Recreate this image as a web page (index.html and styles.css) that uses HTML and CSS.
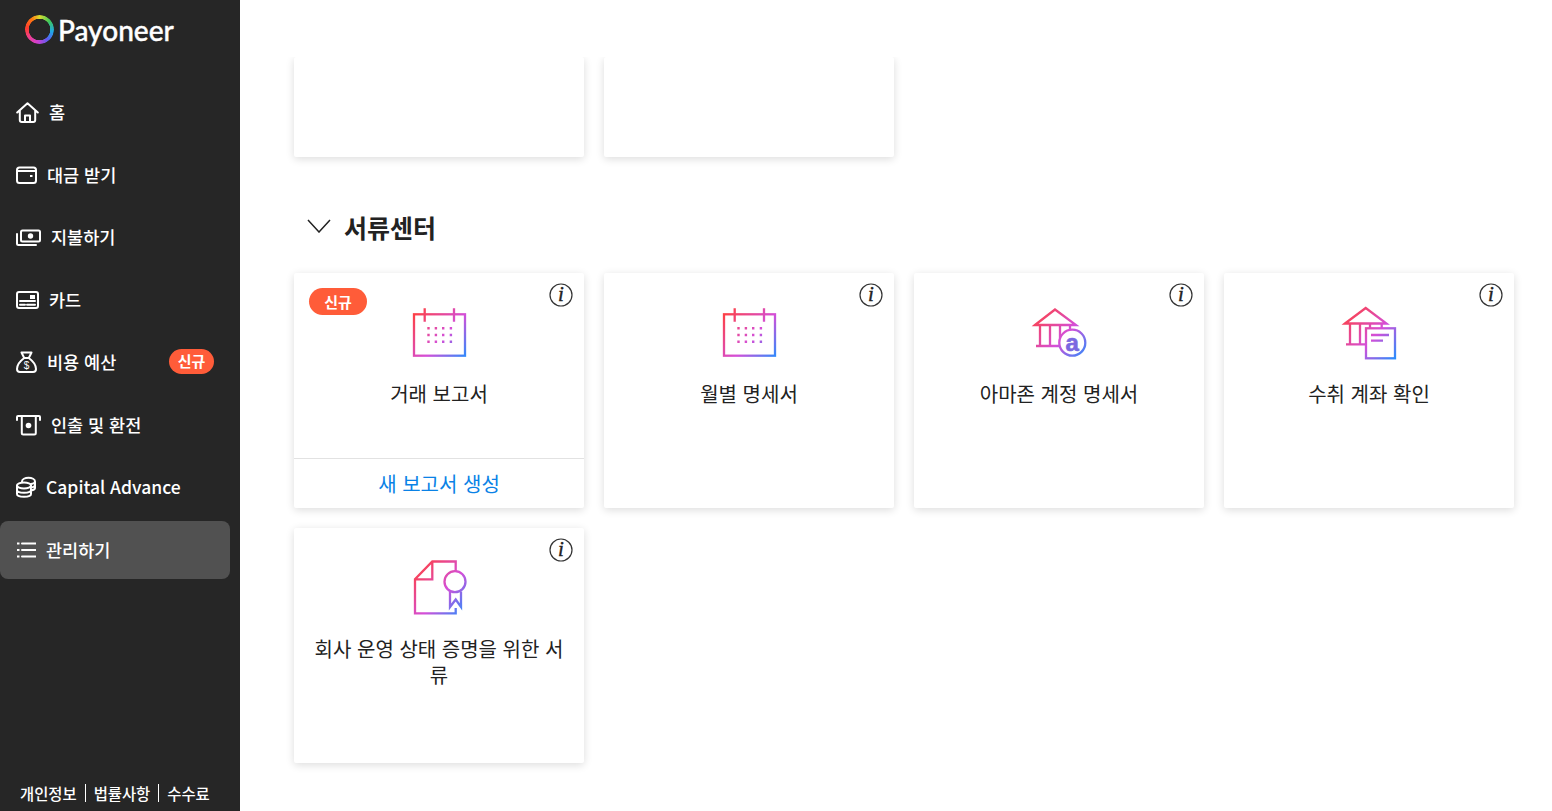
FILE: index.html
```html
<!DOCTYPE html>
<html lang="ko">
<head>
  <title>Payoneer</title>
  <meta charset="UTF-8"/>
  <link rel="stylesheet" href="styles.css">
</head>
<body>

  <svg class="svg-defs" width="0" height="0">
    <defs>
      <linearGradient id="grad" gradientUnits="userSpaceOnUse" x1="6" y1="6" x2="58" y2="54">
        <stop offset="0" stop-color="#ff4040"/>
        <stop offset="0.55" stop-color="#d44fd8"/>
        <stop offset="1" stop-color="#2090ff"/>
      </linearGradient>
    </defs>
  </svg>

  <aside class="sidebar">
    <div class="logo">
      <span class="logo-ring"></span>
      <span class="logo-text">Payoneer</span>
    </div>

    <nav class="nav">
      <a class="nav-item">
        <svg class="nav-icon" width="23" height="24" viewBox="0 0 23 24">
          <path d="M1.200 12.500 11.500 3.200l10.300 9.300M3.800 10.500V20a2 2 0 0 0 2 2h11.400a2 2 0 0 0 2-2v-9.500M9 22v-6.500h5V22"/>
        </svg>
        <span>홈</span>
      </a>
      <a class="nav-item">
        <svg class="nav-icon" width="21" height="24" viewBox="0 0 21 24">
          <rect x="1" y="4.500" width="19" height="15.500" rx="2.500"/>
          <path d="M1 8h18"/>
          <rect class="solid" x="14" y="12" width="2.500" height="2"/>
        </svg>
        <span>대금 받기</span>
      </a>
      <a class="nav-item">
        <svg class="nav-icon" width="25" height="24" viewBox="0 0 25 24">
          <rect x="5" y="5.500" width="19" height="11" rx="1.500"/>
          <circle class="solid" cx="14.500" cy="11" r="2.700"/>
          <path d="M1 9v9.500a1.500 1.500 0 0 0 1.500 1.500H20"/>
        </svg>
        <span>지불하기</span>
      </a>
      <a class="nav-item">
        <svg class="nav-icon" width="23" height="24" viewBox="0 0 23 24">
          <rect x="1" y="4" width="21" height="16" rx="2"/>
          <rect class="solid" x="14" y="7" width="5" height="4"/>
          <path d="M4 13h15M4 16.800h5M11 16.800h8"/>
        </svg>
        <span>카드</span>
      </a>
      <a class="nav-item">
        <svg class="nav-icon" width="21" height="24" viewBox="0 0 21 24">
          <path d="M5.500 2.500h10l-2.700 5.500H8.200zM8.200 8C3.500 11.500 1 15.500 1 19a3 3 0 0 0 3 3h13a3 3 0 0 0 3-3c0-3.500-2.500-7.500-7.200-11"/>
          <text class="bag-dollar" x="10.500" y="19">$</text>
        </svg>
        <span>비용 예산</span>
        <span class="nav-badge">신규</span>
      </a>
      <a class="nav-item">
        <svg class="nav-icon" width="25" height="24" viewBox="0 0 25 24">
          <path d="M1 7V4a1 1 0 0 1 1-1h21a1 1 0 0 1 1 1v3M5.800 3v17a1.500 1.500 0 0 0 1.500 1.500h11a1.500 1.500 0 0 0 1.500-1.500V3"/>
          <circle class="solid" cx="12.500" cy="12.500" r="2.800"/>
        </svg>
        <span>인출 및 환전</span>
      </a>
      <a class="nav-item">
        <svg class="nav-icon" width="20" height="24" viewBox="0 0 20 24">
          <ellipse cx="8" cy="10.500" rx="7" ry="3"/>
          <path d="M1 10.500V19c0 1.600 3 2.800 7 2.800s7-1.200 7-2.800v-8.500M1 15c0 1.600 3 2.800 7 2.800s7-1.200 7-2.800M6 6.500c0-2.200 3-3.800 6.500-3.800S19 4.300 19 6.500v6.500c0 1-1.300 2-4 2.500M15 9c2.300-.3 4-1 4-2.500M15 12.500c2.300-.3 4-1 4-2.500"/>
        </svg>
        <span>Capital Advance</span>
      </a>
      <a class="nav-item active">
        <svg class="nav-icon" width="20" height="24" viewBox="0 0 20 24">
          <path d="M6 5.500h14M6 12h14M6 18.500h14"/>
          <path class="dots" d="M1 5.500h2.500M1 12h2.500M1 18.500h2.500"/>
        </svg>
        <span>관리하기</span>
      </a>
    </nav>

    <div class="side-footer">
      <a>개인정보</a>
      <a>법률사항</a>
      <a>수수료</a>
    </div>
  </aside>

  <main class="main">
    <div class="topbar"></div>

    <div class="scroll">
      <div class="stub-row">
        <div class="card stub"></div>
        <div class="card stub"></div>
      </div>

      <div class="section-head">
        <svg class="chevron" width="24" height="14" viewBox="0 0 24 14">
          <path d="M1 1l11 12L23 1"/>
        </svg>
        <h2>서류센터</h2>
      </div>

      <div class="card-grid">

        <div class="card">
          <span class="card-new">신규</span>
          <svg class="info" width="24" height="24" viewBox="0 0 24 24">
            <circle cx="12" cy="12" r="11"/>
            <text x="12" y="18">i</text>
          </svg>
          <div class="card-body">
            <svg class="card-icon" width="60" height="60" viewBox="0 0 60 60">
              <rect x="5" y="9.300" width="51" height="41.400"/>
              <path d="M15.700 3.300v13.400M45 3.300v13.400"/>
              <path class="grid-dots" d="M18.300 23.300h2.400M25.700 23.300h2.400M33 23.300h2.400M40.700 23.300h2.400M18.300 30h2.400M25.700 30h2.400M33 30h2.400M40.700 30h2.400M18.300 36.700h2.400M25.700 36.700h2.400M33 36.700h2.400M40.700 36.700h2.400"/>
            </svg>
            <div class="card-label">거래 보고서</div>
          </div>
          <a class="card-link">새 보고서 생성</a>
        </div>

        <div class="card">
          <svg class="info" width="24" height="24" viewBox="0 0 24 24">
            <circle cx="12" cy="12" r="11"/>
            <text x="12" y="18">i</text>
          </svg>
          <div class="card-body">
            <svg class="card-icon" width="60" height="60" viewBox="0 0 60 60">
              <rect x="5" y="9.300" width="51" height="41.400"/>
              <path d="M15.700 3.300v13.400M45 3.300v13.400"/>
              <path class="grid-dots" d="M18.300 23.300h2.400M25.700 23.300h2.400M33 23.300h2.400M40.700 23.300h2.400M18.300 30h2.400M25.700 30h2.400M33 30h2.400M40.700 30h2.400M18.300 36.700h2.400M25.700 36.700h2.400M33 36.700h2.400M40.700 36.700h2.400"/>
            </svg>
            <div class="card-label">월별 명세서</div>
          </div>
        </div>

        <div class="card">
          <svg class="info" width="24" height="24" viewBox="0 0 24 24">
            <circle cx="12" cy="12" r="11"/>
            <text x="12" y="18">i</text>
          </svg>
          <div class="card-body">
            <svg class="card-icon" width="60" height="60" viewBox="0 0 60 60">
              <path d="M6 20 26 4.500 47 20zM11 20v21M21 20v21M31 20v21M41 20v10M7 41h27"/>
              <circle class="white" cx="43.300" cy="37.700" r="13"/>
              <text class="amazon-a" x="43.300" y="45.500">a</text>
            </svg>
            <div class="card-label">아마존 계정 명세서</div>
          </div>
        </div>

        <div class="card">
          <svg class="info" width="24" height="24" viewBox="0 0 24 24">
            <circle cx="12" cy="12" r="11"/>
            <text x="12" y="18">i</text>
          </svg>
          <div class="card-body">
            <svg class="card-icon" width="60" height="60" viewBox="0 0 60 60">
              <path d="M6 18.500 26.700 3l20.800 15.500zM11 18.500v20.800M21 18.500v20.800M31 18.500v8M42.700 18.500v8M7 39.300h21"/>
              <rect class="white" x="27" y="23.300" width="29" height="30"/>
              <path d="M32 30h18M32 35.700h12"/>
            </svg>
            <div class="card-label">수취 계좌 확인</div>
          </div>
        </div>

        <div class="card">
          <svg class="info" width="24" height="24" viewBox="0 0 24 24">
            <circle cx="12" cy="12" r="11"/>
            <text x="12" y="18">i</text>
          </svg>
          <div class="card-body">
            <svg class="card-icon" width="60" height="60" viewBox="0 0 60 60">
              <path d="M46.700 11V1.500H23.300L6 19.300v34h40.700V48M23.300 1.500v17.800H6"/>
              <circle class="white" cx="46" cy="21.700" r="10.500"/>
              <path d="M41 31.500v15.500l5.700-7.500 5.300 7.500V31.500"/>
            </svg>
            <div class="card-label">회사 운영 상태 증명을 위한 서류</div>
          </div>
        </div>

      </div>
    </div>
  </main>

</body>
</html>
```

FILE: styles.css
```css
* {
  box-sizing: border-box;
}

html, body {
  height: 100%;
}

body {
  margin: 0;
  display: flex;
  overflow: hidden;
  background-color: white;
  color: #222;
  font-family: "Noto Sans CJK KR", "Noto Sans", sans-serif;
}

.svg-defs {
  position: absolute;
}

/* sidebar */

.sidebar {
  display: flex;
  flex-direction: column;
  flex: none;
  width: 240px;
  height: 811px;
  background-color: #262626;
  color: white;
}

.logo {
  display: flex;
  align-items: center;
  gap: 4px;
  height: 83px;
  padding: 0 0 24px 25px;
}

.logo-ring {
  width: 29px;
  height: 29px;
  border-radius: 50%;
  background: conic-gradient(#d8dc2e 0deg, #3fc85a 50deg, #20a8e8 100deg, #5a5cf0 140deg, #d03fd0 190deg, #f0408a 235deg, #ff3b30 275deg, #ff7a10 325deg, #d8dc2e 360deg);
  -webkit-mask: radial-gradient(circle, transparent 10.5px, black 11px);
  mask: radial-gradient(circle, transparent 10.5px, black 11px);
}

.logo-text {
  font-family: "Lato", sans-serif;
  font-size: 28px;
  font-weight: 500;
  line-height: 30px;
  -webkit-text-stroke: 0.4px white;
}

.nav {
  display: flex;
  flex-direction: column;
  gap: 4.5px;
}

.nav-item {
  display: flex;
  align-items: center;
  gap: 10px;
  width: 230px;
  height: 58px;
  padding: 0 16px;
  border-radius: 8px;
  font-size: 17.500px;
  font-weight: 500;
}

.nav-item:nth-child(odd) span {
  margin-bottom: 2px;
}

.nav-item.active {
  background-color: #515151;
}

.nav-icon {
  flex: none;
  fill: none;
  stroke: white;
  stroke-width: 2;
  stroke-linecap: round;
  stroke-linejoin: round;
}

.nav-icon .solid {
  fill: white;
  stroke: none;
}

.nav-icon .dots {
  stroke-width: 2;
  stroke-linecap: butt;
}

.bag-dollar {
  fill: white;
  stroke: none;
  font-family: "Liberation Sans", sans-serif;
  font-size: 10px;
  text-anchor: middle;
}

.nav-badge {
  margin-left: auto;
  width: 45px;
  height: 25px;
  border-radius: 13px;
  background-color: #ff5c39;
  font-size: 15px;
  font-weight: 700;
  line-height: 24px;
  text-align: center;
}

.side-footer {
  display: flex;
  align-items: center;
  margin-top: auto;
  padding: 0 0 9px 20px;
  font-size: 15.400px;
  font-weight: 500;
  line-height: 18px;
}

.side-footer a + a {
  margin-left: 8px;
  padding-left: 8px;
  border-left: 1px solid white;
}

/* main area */

.main {
  display: flex;
  flex-direction: column;
  flex: 1;
  height: 811px;
}

.topbar {
  flex: none;
  height: 57px;
}

.scroll {
  flex: 1;
  overflow: hidden;
  padding: 0 38px 0 54px;
}

.stub-row {
  display: flex;
  gap: 20px;
}

.card {
  position: relative;
  display: flex;
  flex-direction: column;
  width: 290px;
  height: 235px;
  border-radius: 2px;
  background-color: white;
  box-shadow: 0 2px 8px rgba(0, 0, 0, 0.14);
}

.card.stub {
  height: 100px;
}

.section-head {
  display: flex;
  align-items: center;
  gap: 13px;
  height: 38px;
  margin: 51px 0 27px 13px;
}

.section-head h2 {
  margin: 0;
  font-size: 25px;
  font-weight: 700;
}

.chevron {
  fill: none;
  stroke: #222;
  stroke-width: 1.500;
  margin-top: -2px;
}

.card-grid {
  display: grid;
  grid-template-columns: repeat(4, 290px);
  gap: 20px;
}

.card-new {
  position: absolute;
  top: 15px;
  left: 15px;
  width: 58px;
  height: 27px;
  border-radius: 14px;
  background-color: #ff5c39;
  color: white;
  font-size: 15px;
  font-weight: 700;
  line-height: 27px;
  text-align: center;
}

.info {
  position: absolute;
  top: 10px;
  right: 11px;
  fill: none;
  stroke: #333;
  stroke-width: 1.200;
}

.info text {
  fill: #222;
  stroke: #222;
  stroke-width: 0.4px;
  font-family: "Liberation Serif", serif;
  font-size: 21px;
  font-style: italic;
  text-anchor: middle;
}

.card-body {
  flex: 1;
  display: flex;
  flex-direction: column;
  align-items: center;
  padding: 32px 20px 0;
}

.card-icon {
  flex: none;
  fill: none;
  stroke: url(#grad);
  stroke-width: 2.300;
}

.card-icon .white {
  fill: white;
}

.card-icon .grid-dots {
  stroke-width: 2.400;
}

.amazon-a {
  fill: #7a68e0;
  stroke: #7a68e0;
  stroke-width: 0.6px;
  font-family: "Liberation Sans", sans-serif;
  font-size: 24px;
  font-weight: 700;
  text-anchor: middle;
}

.card-label {
  margin-top: 16px;
  font-size: 20px;
  line-height: 26px;
  text-align: center;
}

.card-link {
  flex: none;
  height: 50px;
  border-top: 1px solid #e2e2e2;
  color: #0a82e6;
  font-size: 20px;
  line-height: 50px;
  text-align: center;
}
```
